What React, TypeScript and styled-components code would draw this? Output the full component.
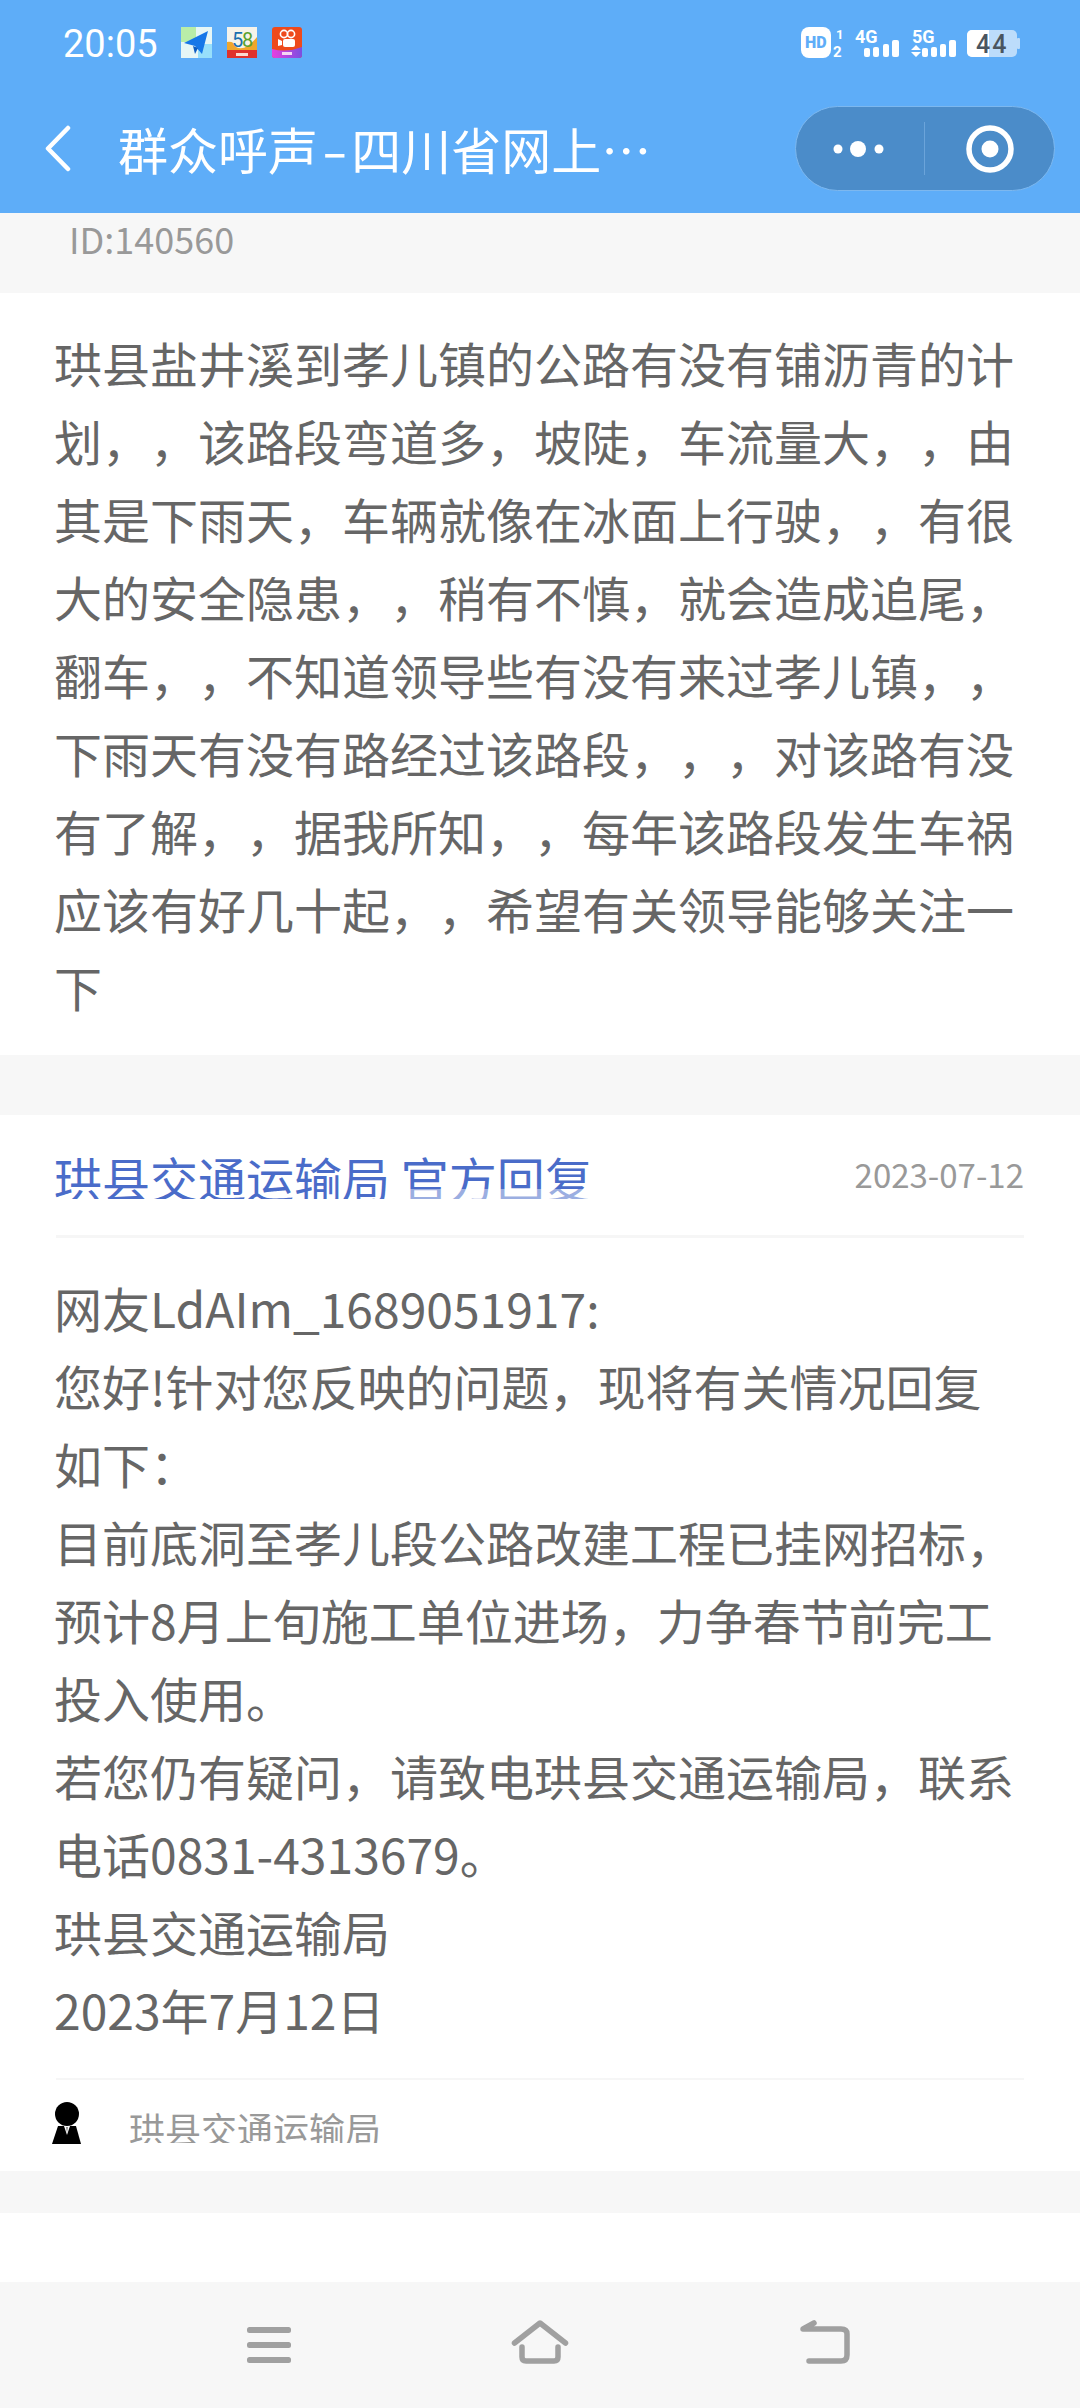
import React from "react";
import styled, { createGlobalStyle } from "styled-components";

const FONT = `"Noto Sans CJK SC", "Noto Sans", sans-serif`;

const GlobalStyle = createGlobalStyle`
	html, body {
		margin: 0;
		padding: 0;
		background: #fff;
	}
	* {
		box-sizing: border-box;
	}
`;

const Page = styled.div`
	width: 1080px;
	height: 2408px;
	display: flex;
	flex-direction: column;
	overflow: hidden;
	background: #fff;
	font-family: ${FONT};
	text-spacing-trim: space-all;
`;

const Header = styled.header`
	height: 213px;
	flex: none;
	background: #5eadf8;
	display: flex;
	flex-direction: column;
`;

const StatusBar = styled.div`
	height: 106px;
	padding: 27px 60px 0 63px;
	display: flex;
	align-items: flex-start;
	color: #fff;
`;

const Clock = styled.div`
	font-family: Roboto, sans-serif;
	font-size: 38px;
	line-height: 34px;
	width: 118px;
`;

const AppIcons = styled.div`
	display: flex;
	gap: 15px;
`;

const StatusIcons = styled.div`
	margin-left: auto;
	display: flex;
	align-items: flex-start;
`;

const TitleBar = styled.div`
	height: 85px;
	padding: 0 25px 0 45px;
	display: flex;
	align-items: center;
`;

const BackButton = styled.div`
	width: 73px;
	flex: none;
	display: flex;
`;

const Title = styled.div`
	flex: 1;
	color: #fff;
	font-size: 50px;
	line-height: 85px;
	white-space: nowrap;
`;

const TitleDash = styled.span`
	display: inline-block;
	margin: 0 8px;
	transform: scaleX(1.5);
`;

const Capsule = styled.div`
	width: 260px;
	height: 85px;
	flex: none;
	border-radius: 43px;
	background: #4b8cc9;
	border: 1px solid #7db8ef;
	display: flex;
	align-items: center;
`;

const CapsuleSide = styled.div<{ $divided?: boolean }>`
	width: 50%;
	height: 53px;
	display: flex;
	align-items: center;
	justify-content: center;
	border-right: ${p => (p.$divided ? "1px solid #6ba4da" : "none")};
`;

const IdRow = styled.div`
	height: 80px;
	flex: none;
	background: #f7f7f7;
	padding: 0 0 0 69px;
	color: #999;
	font-size: 36px;
	line-height: 50px;
`;

const Band = styled.div<{ $height: number }>`
	height: ${p => p.$height}px;
	flex: none;
	background: #f7f7f7;
`;

const Card = styled.section<{ $height: number }>`
	height: ${p => p.$height}px;
	flex: none;
	background: #fff;
	padding: 0 56px 0 54px;
	overflow: hidden;
`;

const Body = styled.div<{ $top: number }>`
	padding-top: ${p => p.$top}px;
	color: #666;
	font-size: 48px;
	line-height: 78px;
	white-space: pre-line;
`;

const ReplyHead = styled.div`
	height: 123px;
	margin-left: 2px;
	padding-top: 42px;
	display: flex;
	justify-content: space-between;
	border-bottom: 3px solid #f6f6f6;
`;

const ReplyTitle = styled.div`
	height: 42px;
	margin-left: -2px;
	overflow: hidden;
	color: #4a6cc9;
	font-size: 48px;
	line-height: 41px;
	position: relative;
`;

const ReplyFade = styled.div`
	position: absolute;
	left: 335px;
	right: 0;
	bottom: 0;
	height: 10px;
	background: rgba(255, 255, 255, 0.45);
`;

const ReplyDate = styled.div`
	color: #999;
	font-size: 33px;
	line-height: 35px;
`;

const Footer = styled.div`
	margin: 30px 0 0 2px;
	border-top: 2px solid #f6f6f6;
	padding-top: 22px;
	display: flex;
	align-items: flex-start;
`;

const FooterIcon = styled.div`
	width: 77px;
	margin-left: -4px;
	flex: none;
	display: flex;
`;

const FooterName = styled.div`
	height: 41px;
	overflow: hidden;
	color: #999;
	font-size: 36px;
	line-height: 52px;
`;

const Spacer = styled.div`
	flex: 1;
	background: #fff;
`;

const NavBar = styled.nav`
	height: 126px;
	flex: none;
	background: #f7f7f7;
	padding: 38px 0 0 246px;
	display: flex;
	align-items: flex-start;
`;

const NavSlot = styled.div<{ $width: number; $top?: number }>`
	width: ${p => p.$width}px;
	padding-top: ${p => p.$top || 0}px;
	flex: none;
	display: flex;
`;

const IssueText = `珙县盐井溪到孝儿镇的公路有没有铺沥青的计
划，，该路段弯道多，坡陡，车流量大，，由
其是下雨天，车辆就像在冰面上行驶，，有很
大的安全隐患，，稍有不慎，就会造成追尾，
翻车，，不知道领导些有没有来过孝儿镇，，
下雨天有没有路经过该路段，，，对该路有没
有了解，，据我所知，，每年该路段发生车祸
应该有好几十起，，希望有关领导能够关注一
下`;

const ReplyText = `网友LdAIm_1689051917:
您好!针对您反映的问题，现将有关情况回复
如下：
目前底洞至孝儿段公路改建工程已挂网招标，
预计8月上旬施工单位进场，力争春节前完工
投入使用。
若您仍有疑问，请致电珙县交通运输局，联系
电话0831-4313679。
珙县交通运输局
2023年7月12日`;

const MapIcon = () => (
	<svg width="31" height="31" viewBox="0 0 31 31">
		<rect width="31" height="31" fill="#e6f6f6" />
		<rect width="15" height="15" fill="#b9eda8" />
		<rect x="17" y="17" width="14" height="14" fill="#97dffb" />
		<path d="M3 16L27 4L21 27L14 19Z" fill="#1677e8" />
		<path d="M12 19L14 27L17 21Z" fill="#0b5cc2" />
	</svg>
);

const FiftyEightIcon = () => (
	<svg width="30" height="31" viewBox="0 0 30 31">
		<rect width="30" height="31" fill="#f6f3ea" />
		<path d="M0 15Q7 14 9 20Q18 25 30 10V25H0Z" fill="#f0a62c" />
		<rect y="23" width="30" height="8" fill="#e0312c" />
		<text x="5" y="20" fontFamily="Roboto" fontSize="20" fill="#1a6fb0">5</text>
		<text x="15" y="20" fontFamily="Roboto" fontSize="20" fill="#5aa02c">8</text>
		<rect x="9" y="26" width="12" height="3" fill="#fbd9d0" />
	</svg>
);

const CameraIcon = () => (
	<svg width="30" height="31" viewBox="0 0 30 31">
		<defs>
			<linearGradient id="kw" x1="0" y1="0" x2="1" y2="0">
				<stop offset="0" stopColor="#e83ee0" />
				<stop offset="1" stopColor="#7a4fe0" />
			</linearGradient>
		</defs>
		<rect width="30" height="31" rx="3" fill="#ee4a1c" />
		<path d="M0 22Q15 26 30 20V28a3 3 0 0 1-3 3H3a3 3 0 0 1-3-3Z" fill="url(#kw)" />
		<circle cx="12" cy="7" r="3.6" fill="none" stroke="#fff" strokeWidth="1.6" />
		<circle cx="19" cy="7" r="3.6" fill="none" stroke="#fff" strokeWidth="1.6" />
		<rect x="11" y="12" width="12" height="8" rx="2" fill="#fff" />
		<path d="M10 14L6 12V19L10 18Z" fill="#fff" />
		<rect x="10" y="25" width="10" height="3" fill="#f6d5f5" />
	</svg>
);

const NetworkIcons = () => (
	<svg width="220" height="33" viewBox="0 0 220 33">
		<rect x="1" y="0" width="30" height="31" rx="8" fill="#fff" />
		<text x="5" y="21" fontFamily="Roboto" fontSize="16" fontWeight="900" fill="#5eadf8">HD</text>
		<text x="36" y="12" fontFamily="Roboto" fontSize="13" fontWeight="700" fill="#fff">1</text>
		<text x="33" y="30" fontFamily="Roboto" fontSize="15" fontWeight="700" fill="#fff">2</text>
		<text x="55" y="16" fontFamily="Roboto" fontSize="18" fontWeight="700" fill="#fff">4G</text>
		<rect x="64" y="21" width="6" height="9" rx="2" fill="#fff" />
		<rect x="73" y="20" width="6" height="10" rx="2" fill="#fff" />
		<rect x="83" y="17" width="6" height="13" rx="2" fill="#fff" />
		<rect x="92" y="13" width="7" height="17" rx="2" fill="#fff" />
		<text x="112" y="16" fontFamily="Roboto" fontSize="18" fontWeight="700" fill="#fff">5G</text>
		<path d="M111 23L116 18L121 23Z M111 25L116 30L121 25Z" fill="#fff" />
		<rect x="122" y="21" width="6" height="9" rx="2" fill="#fff" />
		<rect x="131" y="20" width="6" height="10" rx="2" fill="#fff" />
		<rect x="140" y="17" width="6" height="13" rx="2" fill="#fff" />
		<rect x="149" y="13" width="7" height="17" rx="2" fill="#fff" />
		<rect x="167" y="3" width="50" height="27" rx="5" fill="#bcdcfb" />
		<path d="M172 3H189V30H172a5 5 0 0 1-5-5V8a5 5 0 0 1 5-5Z" fill="#fff" />
		<rect x="217" y="11" width="3" height="11" rx="1" fill="#bcdcfb" />
		<text x="176" y="26" fontFamily="Roboto" fontSize="25" fontWeight="500" letterSpacing="2" fill="#4a5560">44</text>
	</svg>
);

const BackIcon = () => (
	<svg width="28" height="47" viewBox="0 0 28 47" fill="none" stroke="#fff" strokeWidth="4.5" strokeLinecap="round" strokeLinejoin="round">
		<path d="M23 3L3 23.5L23 44" />
	</svg>
);

const DotsIcon = () => (
	<svg width="54" height="20" viewBox="0 0 54 20" fill="#fff">
		<circle cx="5" cy="10" r="4.5" />
		<circle cx="25" cy="10" r="8" />
		<circle cx="46" cy="10" r="4.5" />
	</svg>
);

const TargetIcon = () => (
	<svg width="50" height="50" viewBox="0 0 50 50">
		<circle cx="25" cy="25" r="21" fill="none" stroke="#fff" strokeWidth="5.5" />
		<circle cx="25" cy="25" r="8.5" fill="#fff" />
	</svg>
);

const OfficialIcon = () => (
	<svg width="30" height="43" viewBox="0 0 30 43">
		<circle cx="15" cy="12" r="12" fill="#000" />
		<path d="M6 24H24L29 42H0Z" fill="#000" />
		<path d="M12 24H18L15 33Z" fill="#fff" />
		<path d="M14 25H16L15 31Z" fill="#888" />
	</svg>
);

const MenuIcon = () => (
	<svg width="46" height="36" viewBox="0 0 46 36" fill="#a0a0a0">
		<rect x="1" width="44" height="6" rx="2.5" />
		<rect x="1" y="15" width="44" height="6" rx="2.5" />
		<rect x="1" y="30" width="44" height="6" rx="2.5" />
	</svg>
);

const HomeIcon = () => (
	<svg width="58" height="44" viewBox="0 0 58 44" fill="none" stroke="#a0a0a0" strokeWidth="5.5" strokeLinecap="round" strokeLinejoin="round">
		<path d="M3.5 23L29 3L54.5 23" />
		<path d="M11 27V37Q11 41 15 41H43Q47 41 47 37V27" />
	</svg>
);

const ReturnIcon = () => (
	<svg width="50" height="44" viewBox="0 0 50 44" fill="none" stroke="#a0a0a0" strokeWidth="5.5" strokeLinecap="round" strokeLinejoin="round">
		<path d="M9 41H41Q47 41 47 35V14Q47 9 41 9H3L14 3" />
	</svg>
);

const App = () => (
	<Page>
		<GlobalStyle />
		<Header>
			<StatusBar>
				<Clock>20:05</Clock>
				<AppIcons>
					<MapIcon />
					<FiftyEightIcon />
					<CameraIcon />
				</AppIcons>
				<StatusIcons>
					<NetworkIcons />
				</StatusIcons>
			</StatusBar>
			<TitleBar>
				<BackButton>
					<BackIcon />
				</BackButton>
				<Title>
					群众呼声<TitleDash>-</TitleDash>四川省网上…
				</Title>
				<Capsule>
					<CapsuleSide $divided>
						<DotsIcon />
					</CapsuleSide>
					<CapsuleSide>
						<TargetIcon />
					</CapsuleSide>
				</Capsule>
			</TitleBar>
		</Header>
		<IdRow>ID:140560</IdRow>
		<Card $height={762}>
			<Body $top={30}>{IssueText}</Body>
		</Card>
		<Band $height={60} />
		<Card $height={1056}>
			<ReplyHead>
				<ReplyTitle>
					珙县交通运输局 官方回复
					<ReplyFade />
				</ReplyTitle>
				<ReplyDate>2023-07-12</ReplyDate>
			</ReplyHead>
			<Body $top={30}>{ReplyText}</Body>
			<Footer>
				<FooterIcon>
					<OfficialIcon />
				</FooterIcon>
				<FooterName>珙县交通运输局</FooterName>
			</Footer>
		</Card>
		<Band $height={42} />
		<Spacer />
		<NavBar>
			<NavSlot $width={265} $top={7}>
				<MenuIcon />
			</NavSlot>
			<NavSlot $width={289}>
				<HomeIcon />
			</NavSlot>
			<NavSlot $width={50}>
				<ReturnIcon />
			</NavSlot>
		</NavBar>
	</Page>
);

export default App;
